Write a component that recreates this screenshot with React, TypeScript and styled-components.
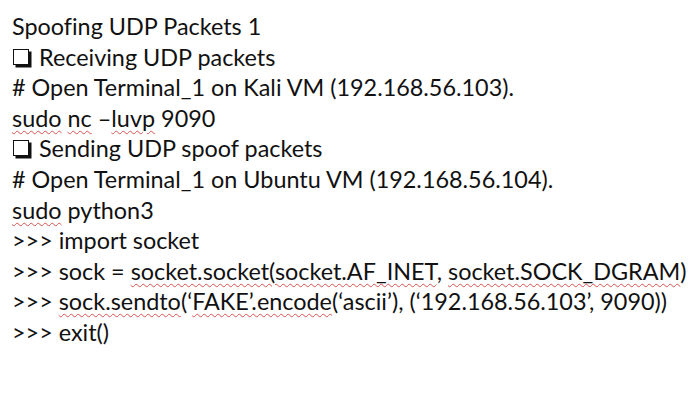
import React from "react";
import styled, { createGlobalStyle } from "styled-components";

const Global = createGlobalStyle`
  html, body { margin: 0; padding: 0; background: #ffffff; }
  body { width: 700px; height: 407px; overflow: hidden; }
`;

const Slide = styled.div`
  width: 700px;
  height: 407px;
  box-sizing: border-box;
  padding: 11px 0 0 12px;
  background: #ffffff;
  font-family: Lato, "Open Sans", sans-serif;
  font-size: 23.4px;
  line-height: 30.6px;
  color: #111111;
  font-variant-ligatures: none;
  display: flex;
  flex-direction: column;
`;

const Line = styled.div`
  white-space: pre;
`;

const Box = styled.span`
  display: inline-block;
  box-sizing: border-box;
  width: 16px;
  height: 16px;
  border: 1.6px solid #111111;
  box-shadow: 2.5px 2.5px 0 #111111;
  margin: 0 10px 0 1px;
  vertical-align: 1px;
`;

const Spell = styled.span`
  text-decoration-line: underline;
  text-decoration-style: wavy;
  text-decoration-color: #d9534f;
  text-decoration-thickness: 1px;
  text-underline-offset: 3px;
`;

export default function App() {
  return (
    <>
      <Global />
      <Slide>
        <Line>Spoofing UDP Packets 1</Line>
        <Line><Box />Receiving UDP packets</Line>
        <Line># Open Terminal_1 on Kali VM (192.168.56.103).</Line>
        <Line><Spell>sudo</Spell> <Spell>nc</Spell> –<Spell>luvp</Spell> 9090</Line>
        <Line><Box />Sending UDP spoof packets</Line>
        <Line># Open Terminal_1 on Ubuntu VM (192.168.56.104).</Line>
        <Line><Spell>sudo</Spell> python3</Line>
        <Line>&gt;&gt;&gt; import socket</Line>
        <Line>&gt;&gt;&gt; sock = <Spell>socket.socket(socket.AF_INET</Spell>, <Spell>socket.SOCK_DGRAM</Spell>)</Line>
        <Line>&gt;&gt;&gt; <Spell>sock.sendto</Spell>(‘<Spell>FAKE’.encode</Spell>(‘ascii’), (‘192.168.56.103’, 9090))</Line>
        <Line>&gt;&gt;&gt; exit()</Line>
      </Slide>
    </>
  );
}
